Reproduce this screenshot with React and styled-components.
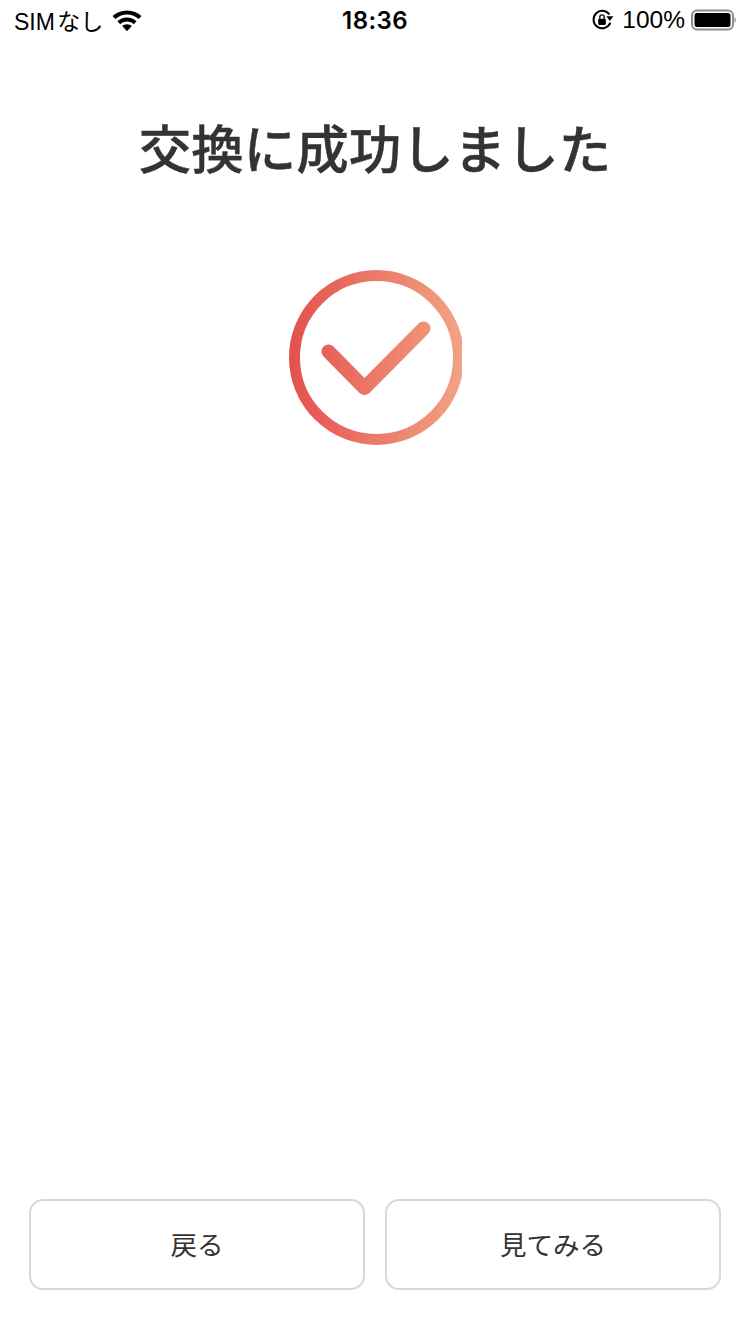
import React from 'react';
import styled, { createGlobalStyle } from 'styled-components';

const Global = createGlobalStyle`
  html, body { margin: 0; padding: 0; background: #fff; }
  body { font-family: "Liberation Sans", "Noto Sans CJK JP", sans-serif; }
`;

const Page = styled.div`
  width: 750px;
  height: 1334px;
  display: flex;
  flex-direction: column;
  overflow: hidden;
  background: #fff;
`;

const StatusBar = styled.div`
  height: 40px;
  display: grid;
  grid-template-columns: 1fr auto 1fr;
  align-items: center;
  padding: 0 14px;
  font-size: 24.5px;
  color: #000;
`;

const StatusSide = styled.div`
  display: flex;
  align-items: center;
  gap: ${p => p.$gap || 0}px;
  justify-content: ${p => (p.$end ? 'flex-end' : 'flex-start')};
`;

const Clock = styled.div`
  font-family: "Inter", "Liberation Sans", sans-serif;
  font-weight: 600;
  font-size: 24px;
  letter-spacing: 0.4px;
`;

const Carrier = styled.span`
  font-size: 23px;
  word-spacing: -4px;
`;

const Percent = styled.span`
  margin-left: 2px;
`;

const Title = styled.h1`
  margin: 73px 0 0;
  height: 66px;
  line-height: 66px;
  text-align: center;
  font-size: 52.5px;
  font-weight: 500;
  -webkit-text-stroke: 0.4px #333;
  color: #333;
  font-family: "Noto Sans CJK JP", sans-serif;
`;

const IconSlot = styled.div`
  margin-top: 91px;
  display: flex;
  justify-content: center;
`;

const Spacer = styled.div`
  flex: 1;
`;

const Actions = styled.div`
  display: flex;
  gap: 20px;
  padding: 0 29px 44px;
`;

const ActionButton = styled.button`
  flex: 1;
  height: 91px;
  box-sizing: border-box;
  border: 2px solid #d8d8d8;
  border-radius: 14px;
  background: #fff;
  color: #333;
  font-size: 26.5px;
  font-family: "Noto Sans CJK JP", sans-serif;
  font-weight: 400;
  padding: 0 0 2px;
`;

const Wifi = () => (
  <svg width="30" height="23" viewBox="0 0 30 22">
    <path d="M15 1c-5.600 0-10.700 2.100-14.500 5.600l2.800 3C6.400 6.800 10.500 5 15 5s8.600 1.800 11.700 4.600l2.800-3C25.700 3.100 20.600 1 15 1z" fill="#000" />
    <path d="M15 8c-3.700 0-7.100 1.400-9.600 3.700l2.800 3c1.800-1.600 4.200-2.600 6.800-2.600s5 1 6.800 2.600l2.800-3C22.100 9.400 18.700 8 15 8z" fill="#000" />
    <path d="M15 14.800c-1.900 0-3.600.7-4.800 1.800l4.800 5.200 4.800-5.200c-1.200-1.100-2.900-1.800-4.800-1.800z" fill="#000" />
  </svg>
);

const OrientationLock = () => (
  <svg width="24" height="24" viewBox="0 0 22 22">
    <path d="M18.700 13.500A8 8 0 1 1 17.800 6" fill="none" stroke="#000" strokeWidth="1.800" />
    <path d="M15 7.500h6.400L18.200 12z" fill="#000" />
    <rect x="7.500" y="9.800" width="7" height="5.700" rx="1" fill="#000" />
    <path d="M9 9.800V8.300a2 2 0 0 1 4 0v1.500" fill="none" stroke="#000" strokeWidth="1.300" />
  </svg>
);

const Battery = () => (
  <svg width="45" height="22" viewBox="0 0 45 22">
    <rect x="1" y="1.500" width="41" height="19" rx="5" fill="none" stroke="#8e8e8e" strokeWidth="2" />
    <rect x="3.500" y="4" width="36" height="14" rx="2.500" fill="#000" />
    <path d="M43.500 8v6c.9-.4 1.500-1.600 1.500-3s-.6-2.600-1.500-3z" fill="#a0a0a0" />
  </svg>
);

const SuccessMark = () => (
  <svg width="173" height="175" viewBox="0 0 173 175">
    <defs>
      <linearGradient id="mark" gradientUnits="userSpaceOnUse" x1="0" y1="0" x2="173" y2="0">
        <stop offset="0" stopColor="#e4504e" />
        <stop offset="1" stopColor="#f2a383" />
      </linearGradient>
    </defs>
    <circle cx="87.500" cy="87.500" r="82" fill="none" stroke="url(#mark)" strokeWidth="11" />
    <path
      d="M39.500 81.500L75.500 118L134.500 58.500"
      fill="none"
      stroke="url(#mark)"
      strokeWidth="14"
      strokeLinecap="round"
      strokeLinejoin="round"
    />
  </svg>
);

export default function App() {
  return (
    <Page>
      <Global />
      <StatusBar>
        <StatusSide $gap={9}>
          <Carrier>SIM なし</Carrier>
          <Wifi />
        </StatusSide>
        <Clock>18:36</Clock>
        <StatusSide $end $gap={6}>
          <OrientationLock />
          <Percent>100%</Percent>
          <Battery />
        </StatusSide>
      </StatusBar>
      <Title>交換に成功しました</Title>
      <IconSlot>
        <SuccessMark />
      </IconSlot>
      <Spacer />
      <Actions>
        <ActionButton>戻る</ActionButton>
        <ActionButton>見てみる</ActionButton>
      </Actions>
    </Page>
  );
}
